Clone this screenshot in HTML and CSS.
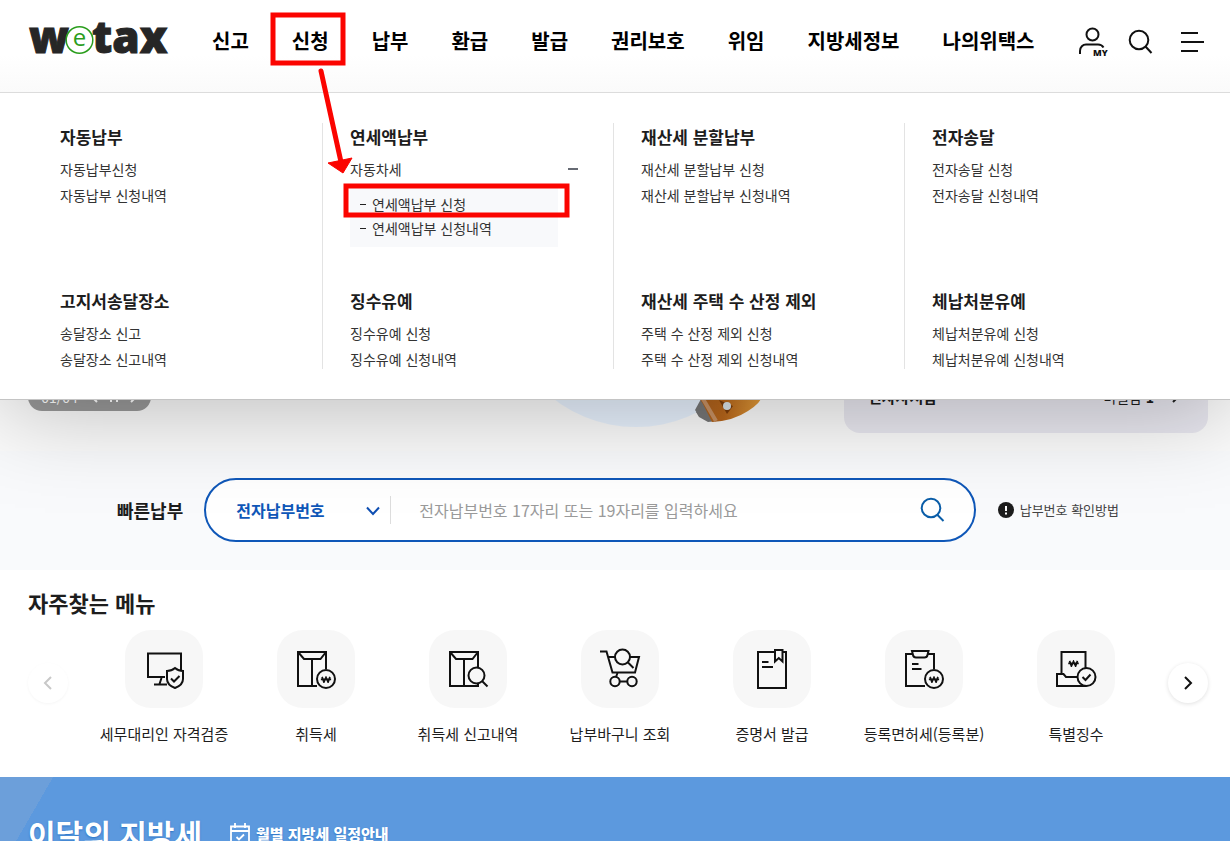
FILE: index.html
```html
<!DOCTYPE html>
<html lang="ko">
<head>
<meta charset="utf-8">
<meta name="viewport" content="width=device-width, initial-scale=1">
<title>wetax</title>
<link rel="stylesheet" href="styles.css">
</head>
<body>
<svg class="defs" aria-hidden="true">
  <symbol id="won" viewBox="0 0 12 8"><path d="M1.5 1 3.6 7 6 1.6 8.4 7 10.5 1M0 3.8h12" fill="none" stroke="#111" stroke-width="1.9"/></symbol>
</svg>

<header class="header">
  <a class="logo" href="#" aria-label="wetax">
    <svg width="138" height="40" viewBox="0 0 138 40">
      <text class="logo-bold" x="1" y="32">w</text>
      <text class="logo-bold" x="64" y="32">tax</text>
      <circle cx="51.500" cy="19" r="13.300" fill="#fff" stroke="#2a9d1c" stroke-width="1.500"/>
      <text class="logo-e" x="51.500" y="25" text-anchor="middle">e</text>
    </svg>
  </a>
  <nav class="nav">
    <a href="#">신고</a><a href="#">신청</a><a href="#">납부</a><a href="#">환급</a><a href="#">발급</a><a href="#">권리보호</a><a href="#">위임</a><a href="#">지방세정보</a><a href="#">나의위택스</a>
  </nav>
  <div class="tools">
    <button class="tool" aria-label="MY">
      <svg width="32" height="32" viewBox="0 0 32 32"><g fill="none" stroke="#111" stroke-width="2"><circle cx="16.500" cy="8.500" r="6"/><path d="M4 28v-3c0-4 3-6.500 6-6.500h12c2.500 0 4.500 1.200 5.500 3"/></g><text class="my" x="17" y="30">MY</text></svg>
    </button>
    <button class="tool" aria-label="검색">
      <svg width="28" height="28" viewBox="0 0 28 28" fill="none" stroke="#111" stroke-width="2"><circle cx="11" cy="12" r="9.300"/><path d="m17.500 18.500 6 6.500"/></svg>
    </button>
    <button class="tool" aria-label="전체메뉴">
      <svg width="28" height="28" viewBox="0 0 28 28" fill="none" stroke="#111" stroke-width="2"><path d="M3 5h17M3 14h23M3 23h17"/></svg>
    </button>
  </div>

  <div class="mega">
    <section class="group"><h2>자동납부</h2><ul><li><a href="#">자동납부신청</a></li><li><a href="#">자동납부 신청내역</a></li></ul></section>
    <section class="group"><h2>연세액납부</h2>
      <ul>
        <li><a class="toggle" href="#">자동차세</a>
          <ul class="sub"><li><a href="#">연세액납부 신청</a></li><li><a href="#">연세액납부 신청내역</a></li></ul>
        </li>
      </ul>
    </section>
    <section class="group"><h2>재산세 분할납부</h2><ul><li><a href="#">재산세 분할납부 신청</a></li><li><a href="#">재산세 분할납부 신청내역</a></li></ul></section>
    <section class="group"><h2>전자송달</h2><ul><li><a href="#">전자송달 신청</a></li><li><a href="#">전자송달 신청내역</a></li></ul></section>
    <section class="group"><h2>고지서송달장소</h2><ul><li><a href="#">송달장소 신고</a></li><li><a href="#">송달장소 신고내역</a></li></ul></section>
    <section class="group"><h2>징수유예</h2><ul><li><a href="#">징수유예 신청</a></li><li><a href="#">징수유예 신청내역</a></li></ul></section>
    <section class="group"><h2>재산세 주택 수 산정 제외</h2><ul><li><a href="#">주택 수 산정 제외 신청</a></li><li><a href="#">주택 수 산정 제외 신청내역</a></li></ul></section>
    <section class="group"><h2>체납처분유예</h2><ul><li><a href="#">체납처분유예 신청</a></li><li><a href="#">체납처분유예 신청내역</a></li></ul></section>
  </div>

  <svg class="marks" width="600" height="240" viewBox="0 0 600 240" aria-hidden="true">
    <g fill="none" stroke="#fb0400" stroke-width="5"><rect x="273" y="15" width="70" height="48"/><rect x="346" y="186" width="221" height="29"/><path d="m321 71 20 91" stroke-linecap="round"/></g>
    <path d="m328 163 24-5-9 15z" fill="#fb0400" stroke="#fb0400"/>
  </svg>
</header>

<main class="main">
  <section class="hero">
    <div class="pager"><span>01/04</span>
      <svg width="48" height="12" viewBox="0 0 48 12" fill="none" stroke="#fff" stroke-width="2"><path d="M7 1 2 6l5 5M21 1v10M27 1v10M41 1l5 5-5 5"/></svg>
    </div>
    <svg class="art" width="270" height="270" viewBox="0 0 270 270" aria-hidden="true">
      <defs><linearGradient id="wood" x1="0" y1="0" x2="1" y2="0"><stop offset="0" stop-color="#a9601f"/><stop offset=".4" stop-color="#b8661b"/><stop offset="1" stop-color="#e6a03c"/></linearGradient></defs>
      <circle cx="135" cy="135" r="135" fill="#e8f2fe"/>
      <path d="m203 250-8 5 3 5 9 5 9-1z" fill="#777"/>
      <path d="m200 242-6 11 4 6 9 5 9-1-11-21z" fill="#777"/>
      <path d="M195 236h68q-3 10-16 18-15 10-36 11l-9-18z" fill="url(#wood)"/>
      <path d="m199 237 6 10 10 17" fill="none" stroke="#c89265" stroke-width="4"/>
      <path d="m218 243 8 14 6-8z" fill="#7b3b09"/>
      <circle cx="226" cy="249" r="4" fill="#dce5ea"/>
    </svg>
    <a class="card" href="#"><strong>전자사서함</strong><span>미열람 <b>1</b></span><svg width="10" height="12" viewBox="0 0 10 12" fill="none" stroke="#222" stroke-width="2"><path d="m3 1 5 5-5 5"/></svg></a>
  </section>

  <form class="quick">
    <label class="quick-label" for="pay-no">빠른납부</label>
    <div class="search">
      <div class="picker">
        <select aria-label="번호 종류"><option>전자납부번호</option></select>
        <svg class="chevron" width="14" height="10" viewBox="0 0 14 10" fill="none" stroke="#0f4fb3" stroke-width="2"><path d="m1 1.500 6 6.500 6-6.500"/></svg>
      </div>
      <input id="pay-no" type="text" placeholder="전자납부번호 17자리 또는 19자리를 입력하세요">
      <button class="find" type="button" aria-label="검색">
        <svg width="26" height="26" viewBox="0 0 26 26" fill="none" stroke="#0a5da8" stroke-width="2"><circle cx="11" cy="11" r="9.300"/><path d="m17 17.500 6.500 6.500"/></svg>
      </button>
    </div>
    <a class="help" href="#"><svg width="16" height="16" viewBox="0 0 16 16"><circle cx="8" cy="8" r="8" fill="#1d1d1d"/><path d="M8 4v5M8 10.500v2" stroke="#fff" stroke-width="2"/></svg>납부번호 확인방법</a>
  </form>

  <section class="often">
    <h2>자주찾는 메뉴</h2>
    <div class="carousel">
      <button class="arrow prev" aria-label="이전" disabled><svg width="10" height="14" viewBox="0 0 10 14" fill="none" stroke="#c8c8c8" stroke-width="2"><path d="M8 1 2 7l6 6"/></svg></button>
      <ul class="tiles">
        <li><a href="#"><svg class="tile" viewBox="0 0 78 78"><path d="M40 47H23V23.500h33V40M36.500 48l-2 6M29 54.500h13"/><path d="M50 38q3.500 3 8 3v8q0 6-8 9-8-3-8-9v-8q4.500 0 8-3zM46 48.500l3 3 5.500-5.500"/></svg>세무대리인 자격검증</a></li>
        <li><a href="#"><svg class="tile" viewBox="0 0 78 78"><path d="M40 56H21V22h28v17M21 22l6 7h16.500l5.500-7M35 29v27"/><circle cx="49" cy="49" r="9"/><use href="#won" x="43.500" y="46" width="11" height="7"/></svg>취득세</a></li>
        <li><a href="#"><svg class="tile" viewBox="0 0 78 78"><path d="M49 54v2H21V22h28v16M21 22l6 7h16.500l5.500-7M35 29v27"/><circle cx="47.500" cy="45.500" r="8"/><path d="m53 51 5.500 5.500"/></svg>취득세 신고내역</a></li>
        <li><a href="#"><svg class="tile" viewBox="0 0 78 78"><path d="M19 21.500h6.500l6 21H54L58 27h-9M27 27h7"/><circle cx="41.500" cy="27" r="7.500"/><path d="m47 32.500 5.500 5.500M36.500 43l-1.500 4M39 51.500h7"/><circle cx="34" cy="51.500" r="4.700"/><circle cx="51" cy="51.500" r="4.700"/></svg>납부바구니 조회</a></li>
        <li><a href="#"><svg class="tile" viewBox="0 0 78 78"><path d="M41 22H25v36h28V22h-3M29 32h6.500M29 37h11M42 20h7.500v11.500l-3.700-3.500-3.800 3.500z"/></svg>증명서 발급</a></li>
        <li><a href="#"><svg class="tile" viewBox="0 0 78 78"><path d="M40 56H21V24h6M43 24h6v15M27 21h16.500l-1 4q-.5 2.500-3 2.500h-8.500q-2.500 0-3-2.500zM27 34h6.500M27 39h9.500"/><circle cx="49" cy="49" r="9"/><use href="#won" x="43.500" y="46" width="11" height="7"/></svg>등록면허세(등록분)</a></li>
        <li><a href="#"><svg class="tile" viewBox="0 0 78 78"><path d="M24.500 43V22h24v16M49 56H20V44h6.500l2.500 3h11"/><circle cx="49.500" cy="47" r="9"/><path d="m45.500 47 3 3 5-5.500"/><use href="#won" x="31" y="30" width="11" height="7"/></svg>특별징수</a></li>
      </ul>
      <button class="arrow next" aria-label="다음"><svg width="10" height="14" viewBox="0 0 10 14" fill="none" stroke="#111" stroke-width="2"><path d="m2 1 6 6-6 6"/></svg></button>
    </div>
  </section>

  <section class="month">
    <h2>이달의 지방세</h2>
    <a href="#"><svg width="20" height="22" viewBox="0 0 20 22" fill="none" stroke="#fff" stroke-width="1.800"><path d="M1 3.500h18V21H1zM1 8h18M5 0v5M15 0v5M6.500 14l2.500 2.500 5-5"/></svg>월별 지방세 일정안내</a>
  </section>
</main>
</body>
</html>
```
FILE: styles.css
```css
* { box-sizing: border-box; }
body {
  margin: 0;
  height: 100vh;
  overflow: hidden;
  display: flex;
  flex-direction: column;
  background: #fff;
  color: #1d1d1d;
  font-family: "Noto Sans CJK KR", sans-serif;
  font-size: 14px;
  line-height: 20px;
}
a { color: inherit; text-decoration: none; }
ul { list-style: none; margin: 0; padding: 0; }
h2 { margin: 0; font-weight: 700; }
button { border: 0; padding: 0; background: none; display: flex; align-items: center; justify-content: center; }
.defs { position: absolute; width: 0; height: 0; }

/* header */
.header {
  position: relative;
  z-index: 2;
  flex: none;
  display: flex;
  align-items: center;
  height: 93px;
  padding: 0 24px 10px 28px;
  background: linear-gradient(#fff 60%, #fafafa);
  border-bottom: 1px solid #dcdcdc;
}
.logo { display: flex; margin-right: 46px; }
.logo svg { overflow: visible; }
.logo-bold { font: 800 44px "Open Sans", sans-serif; fill: #262626; stroke: #262626; stroke-width: 1; }
.logo-e { font: 400 24px "Open Sans", sans-serif; fill: #2a9d1c; }
.nav { display: flex; gap: 43px; color: #000; font-size: 20px; font-weight: 700; line-height: 28px; white-space: nowrap; }
.tools { display: flex; gap: 22px; margin-left: auto; padding-top: 2px; }
.tool { width: 28px; height: 32px; }
.tool:first-child { width: 32px; margin-right: -2px; }
.tool svg { flex: none; }
.my { font: 800 9px "Open Sans", sans-serif; fill: #111; }

/* open menu panel */
.mega {
  position: absolute;
  top: 93px;
  left: 0;
  right: 0;
  display: grid;
  grid-template-columns: repeat(4, 1fr);
  padding: 30px 35px 30px 31px;
  background: #fff;
  border-bottom: 1px solid #c4c4c4;
  box-shadow: 0 10px 90px rgba(0, 0, 0, .26);
  clip-path: inset(0 0 -200px 0);
  color: #333;
}
.group { padding: 0 35px 0 27px; border-left: 1px solid #e3e3e3; }
.group:nth-child(4n+1) { padding-left: 28px; border-color: transparent; }
.group:nth-child(-n+4) { padding-bottom: 40px; }
.group h2 { margin-bottom: 8px; color: #1d1d1d; font-size: 17px; line-height: 28px; white-space: nowrap; }
.group ul { display: grid; gap: 6px; }
.toggle { display: flex; align-items: center; justify-content: space-between; margin-bottom: 6px; }
.toggle::after { content: ""; width: 10px; height: 2px; background: #666a73; }
.group .sub { gap: 4px; margin-right: 20px; padding: 9px 0 9px 10px; background: #f8f9fb; }
.sub a { display: flex; align-items: center; gap: 6px; }
.sub a::before { content: ""; width: 6px; height: 1px; background: #222; }
.marks { position: absolute; top: 0; left: 0; pointer-events: none; }

/* hero */
.main { flex: 1; display: flex; flex-direction: column; min-height: 0; }
.hero { flex: none; display: flex; align-items: flex-end; height: 358px; padding: 0 22px 0 28px; background: #fbfbfb; }
.pager { display: flex; align-items: center; justify-content: center; gap: 12px; width: 123px; height: 28px; margin-bottom: 40px; border-radius: 14px; background: #999; color: #fff; }
.art { margin: 0 73px 24px auto; }
.card { display: flex; align-items: center; gap: 16px; width: 364px; height: 72px; margin-bottom: 18px; padding: 0 28px 0 24px; border-radius: 0 0 16px 16px; background: #e9e8f0; }
.card strong { flex: 1; font-size: 15px; }

/* quick payment */
.quick { flex: none; display: flex; align-items: center; padding: 27px 111px 28px 117px; background: #f9fafc; }
.quick-label { margin-right: 21px; font-size: 18px; font-weight: 700; white-space: nowrap; }
.search { flex: 1; display: flex; align-items: center; height: 64px; padding: 0 28px 0 30px; border: 2px solid #0f57b8; border-radius: 32px; background: #fff; }
.picker { position: relative; width: 155px; border-right: 1px solid #ddd; }
.picker select { width: 100%; height: 28px; padding: 0; border: 0; appearance: none; background: none; color: #0f57b8; font: 700 16px "Noto Sans CJK KR", sans-serif; }
.chevron { position: absolute; top: 10px; right: 10px; pointer-events: none; }
.search input { flex: 1; min-width: 0; height: 40px; padding: 0 0 0 28px; border: 0; outline: 0; background: none; color: #222; font: 400 16px "Noto Sans CJK KR", sans-serif; }
.search input::placeholder { color: #9a9a9a; }
.help { display: flex; align-items: center; gap: 6px; margin-left: 22px; color: #444; font-size: 13px; white-space: nowrap; }

/* frequent menus */
.often { flex: none; padding: 16px 22px 33px 28px; }
.often h2 { margin-bottom: 12px; font-size: 22px; line-height: 32px; }
.carousel { display: flex; align-items: center; }
.arrow { width: 40px; height: 40px; margin-bottom: 8px; border-radius: 50%; background: #fff; box-shadow: 0 1px 4px rgba(0, 0, 0, .12); }
.arrow:disabled { box-shadow: 0 1px 3px rgba(0, 0, 0, .04); }
.prev { margin-right: 20px; }
.next { margin-left: 16px; }
.tiles { flex: 1; display: grid; grid-template-columns: repeat(7, 1fr); }
.tiles a { display: flex; flex-direction: column; align-items: center; gap: 16px; font-size: 15px; white-space: nowrap; }
.tile { width: 78px; height: 78px; border-radius: 26px; background: #f7f7f7; fill: none; stroke: #111; stroke-width: 2; }

/* monthly tax */
.month {
  flex: 1;
  display: flex;
  align-items: flex-start;
  gap: 28px;
  padding: 36px 28px 0;
  background: linear-gradient(120deg, #6c9fda 0, #6c9fda 46px, #5c99de 46px);
  color: #fff;
  text-shadow: 0 1px 2px #2873c6;
  white-space: nowrap;
  overflow: hidden;
}
.month h2 { font-size: 30px; line-height: 40px; }
.month a { display: flex; align-items: center; gap: 6px; padding-top: 10px; font-size: 15px; font-weight: 900; }
```
